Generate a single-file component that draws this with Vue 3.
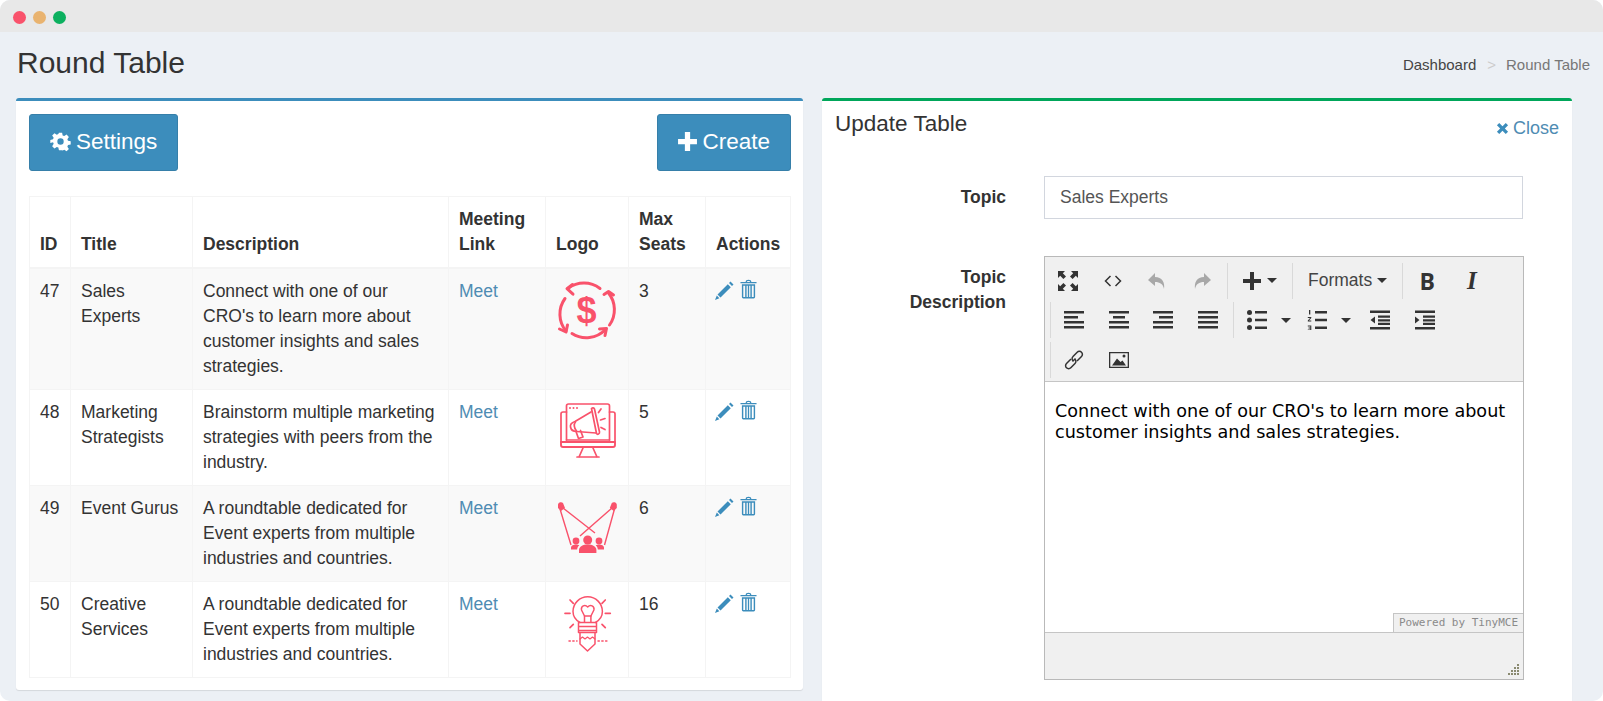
<template>
  <div class="window">
    <div class="titlebar">
      <span class="dot red"></span>
      <span class="dot amber"></span>
      <span class="dot green"></span>
    </div>

    <div class="page-head">
      <h1>Round Table</h1>
      <div class="crumbs">
        <a>Dashboard</a>
        <span class="sep">&gt;</span>
        <span class="current">Round Table</span>
      </div>
    </div>

    <div class="columns">
      <section class="box box-list">
        <div class="actions-bar">
          <button class="btn">
            <svg class="btn-icon" viewBox="0 0 24 24"><path fill-rule="evenodd" d="M10 1h4l.7 3.400 2 .8 2.900-1.900 2.900 2.900-1.900 2.900.8 2 3.400.7v4l-3.400.7-.8 2 1.900 2.900-2.900 2.900-2.900-1.900-2 .8L14 23h-4l-.7-3.400-2-.8-2.900 1.900-2.900-2.900 1.900-2.900-.8-2L-.8 14v-4l3.400-.7.8-2-1.900-2.900 2.900-2.900 2.900 1.900 2-.8zM12 8a4 4 0 1 0 0 8 4 4 0 0 0 0-8z" transform="translate(1.100 1.100) scale(.91)"/></svg>
            Settings
          </button>
          <button class="btn btn-create">
            <svg class="btn-icon plus" viewBox="0 0 20 20"><path d="M7.500 1h5v6.500H19v5h-6.500V19h-5v-6.500H1v-5h6.500z"/></svg>
            Create
          </button>
        </div>

        <table class="grid">
          <colgroup>
            <col style="width: 41px" />
            <col style="width: 122px" />
            <col style="width: 256px" />
            <col style="width: 97px" />
            <col style="width: 83px" />
            <col style="width: 77px" />
            <col style="width: 85px" />
          </colgroup>
          <thead>
            <tr>
              <th>ID</th>
              <th>Title</th>
              <th>Description</th>
              <th>Meeting Link</th>
              <th>Logo</th>
              <th>Max Seats</th>
              <th>Actions</th>
            </tr>
          </thead>
          <tbody>
            <tr v-for="row in rows" :key="row.id">
              <td>{{ row.id }}</td>
              <td>{{ row.title }}</td>
              <td>{{ row.description }}</td>
              <td><a>Meet</a></td>
              <td class="logo-cell">
                <!-- dollar cycle -->
                <svg v-if="row.logo === 'money'" class="logo" viewBox="1 0 60 60">
                  <g fill="none" stroke="#f9526b" stroke-width="3" stroke-linecap="round" stroke-linejoin="round">
                    <path d="M12 9.500 A26.500 26.500 0 0 1 44 9.500" />
                    <path d="M16.500 5.500L11 9.700l6 5.500" />
                    <path d="M52.500 14 A26.500 26.500 0 0 1 53.500 46" />
                    <path d="M48 15.500l4.500-3 5 3.500" />
                    <path d="M49.500 50.500 A26.500 26.500 0 0 1 16 54.500" />
                    <path d="M43.500 50l7-.5-1.500 7" />
                    <path d="M10 52 A26.500 26.500 0 0 1 9 19.500" />
                    <path d="M3.500 50l6.500 3 1.500-7" />
                  </g>
                  <text x="30.500" y="44" text-anchor="middle" class="dollar">$</text>
                </svg>
                <!-- megaphone on a monitor -->
                <svg v-else-if="row.logo === 'marketing'" class="logo" viewBox="0 0 60 60">
                  <g fill="none" stroke="#f9526b" stroke-width="1.700" stroke-linejoin="round" stroke-linecap="round">
                    <path d="M9.500 40V6a2 2 0 0 1 2-2h39a2 2 0 0 1 2 2v34" />
                    <path d="M9.500 12H6a2 2 0 0 0-2 2v28h54V14a2 2 0 0 0-2-2h-3.500" />
                    <path d="M4 42v3a2 2 0 0 0 2 2h50a2 2 0 0 0 2-2v-3z" stroke-width="1.900" />
                    <path d="M26 48l-4 9M36 48l4 9M20 57h22" />
                    <path d="M34 12L18 21.500c-3 1-5 3-4.500 5.500s3 4.500 6 4.500L39 33" />
                    <path d="M34.500 8.500c1-1 2.500-1 3 .5l5 23c.3 2-2 3-3 1.500z" />
                    <path d="M19 31.500l2.500 7 4.500-1.500-2.500-6.500" />
                    <path d="M18.500 22c-2 2-1.500 6 1 9" />
                    <path d="M44 9l-2.500 3.500M48 18.500l-4.500 1.500M48 29.500l-4-2" />
                    <path d="M9.500 40h43" />
                  </g>
                  <g fill="#f9526b">
                    <circle cx="13" cy="8" r="1" />
                    <circle cx="16.500" cy="8" r="1" />
                    <circle cx="20" cy="8" r="1" />
                  </g>
                </svg>
                <!-- spotlights on a crowd -->
                <svg v-else-if="row.logo === 'event'" class="logo" viewBox="0 0 60 60">
                  <g stroke="#f9526b" stroke-width="1.400" fill="none">
                    <path d="M3 13l11 36M6 12l32 25" />
                    <path d="M57.500 13l-10 36M55 12L23 40" />
                  </g>
                  <g fill="#f9526b">
                    <path d="M1 8.500a3 3 0 0 1 5-1.500l2 5-4 3-3-3z" />
                    <path d="M59.800 8.500a3 3 0 0 0-5-1.500l-2 5 4 3 3-3z" />
                    <circle cx="30.700" cy="44" r="4.500" />
                    <path d="M22 57v-3c0-3.500 4-5.500 8.700-5.500s8.700 2 8.700 5.500v3z" />
                    <circle cx="19" cy="45" r="3.400" />
                    <path d="M14 53.500v-2c0-2 2.500-3 5-3 1.300 0 2.500.2 3.300.7-1.500 1-2 3-2.200 4.300z" />
                    <circle cx="42" cy="45" r="3.400" />
                    <path d="M47 53.500v-2c0-2-2.500-3-5-3-1.300 0-2.500.2-3.300.7 1.500 1 2 3 2.200 4.300z" />
                  </g>
                </svg>
                <!-- light bulb pencil -->
                <svg v-else class="logo" viewBox="0 0 60 60">
                  <g fill="none" stroke="#f9526b" stroke-width="1.500" stroke-linecap="round" stroke-linejoin="round">
                    <path d="M23 30.500c-4.500-2.500-7-6.500-7-11a14.700 14.700 0 0 1 29.400 0c0 4.500-2.500 8.500-7 11" />
                    <path d="M27.500 30v-6l-3-6c-.8-4 3.500-6 6.200-3 2.700-3 7-1 6.200 3l-3 6v6" />
                    <path d="M27.500 24h6.500" />
                    <path d="M21.500 30.500h18M21.500 34.500h18M21.500 38.500h18M21.500 30.500v10M39.500 30.500v10M21.500 40.500h18" />
                    <path d="M23 41v11l7.500 7 7.500-7V41" />
                    <path d="M23 47l2.500-2 2.500 2 2.500-2 2.500 2 2.500-2 2.500 2" stroke-width="1.200" />
                    <path d="M8 21.300h5M48.300 21.300h5M13 8l3.300 3.300M48.300 8L45 11.300M13 35.700l3.300-3.400M48.300 35.700L45 32.300" stroke-width="1.700" />
                    <path d="M12 49h8M41 49h9" stroke-dasharray="1.300 2.500" stroke-width="1.500" />
                  </g>
                </svg>
              </td>
              <td>{{ row.seats }}</td>
              <td class="row-actions">
                <svg class="act-icon" viewBox="0 0 20 20"><path d="M13.800 3.200l3 3L6.500 16.500l-3-3zM15 2l1.500-1.500 3 3L18 5zM2.800 14.600l2.600 2.600L1 19z" /></svg>
                <svg class="act-icon trash" viewBox="0 0 18 20"><path fill-rule="evenodd" d="M6 2.500C6 1 7 .3 9 .3s3 .7 3 2.200h5.500V4H.5V2.500zM7.300 2.500h3.400C10.700 1.800 10 1.500 9 1.500s-1.700.3-1.700 1zM2 5h14v13.500a1.500 1.500 0 0 1-1.500 1.500h-11A1.500 1.500 0 0 1 2 18.500zM3.500 6.500v12h2v-12zM7 6.500v12h1.300v-12zM9.700 6.500v12H11v-12zM12.500 6.500v12h2v-12z" /></svg>
              </td>
            </tr>
          </tbody>
        </table>
      </section>

      <section class="box box-form">
        <div class="form-head">
          <h3>Update Table</h3>
          <a class="close">
            <svg class="close-icon" viewBox="0 0 14 14"><path d="M3.500 1L7 4.500 10.500 1 13 3.500 9.500 7l3.500 3.500L10.500 13 7 9.500 3.500 13 1 10.500 4.500 7 1 3.500z" /></svg>
            Close
          </a>
        </div>

        <div class="field">
          <label>Topic</label>
          <input class="text-input" value="Sales Experts" />
        </div>

        <div class="field field-editor">
          <label>Topic<br />Description</label>
          <div class="editor">
            <div class="toolbar">
              <div class="tool-row">
                <div class="tool-group first">
                  <span class="tool"><svg viewBox="0 0 20 20"><path d="M0 0h7L4.800 2.200 8 5.400 5.400 8 2.200 4.800 0 7zM20 0v7l-2.200-2.200L14.600 8 12 5.400l3.200-3.200L13 0zM0 20v-7l2.200 2.200L5.400 12 8 14.600l-3.200 3.200L7 20zM20 20h-7l2.200-2.200-3.200-3.200 2.600-2.600 3.200 3.200L20 13z" /></svg></span>
                  <span class="tool"><svg viewBox="0 0 20 20" class="stroke-icon"><path d="M7.500 5L2.500 10l5 5M12.500 5l5 5-5 5" /></svg></span>
                  <span class="tool muted"><svg viewBox="0 0 20 20"><path d="M8 2L1 9l7 6v-4c5 0 8 2 9 7 1-7-2-12-9-12z" /></svg></span>
                  <span class="tool muted"><svg viewBox="0 0 20 20"><path d="M12 2l7 7-7 6v-4c-5 0-8 2-9 7-1-7 2-12 9-12z" /></svg></span>
                </div>
                <div class="tool-group">
                  <span class="tool wide"><svg viewBox="0 0 20 20"><path d="M8 1h4v7h7v4h-7v7H8v-7H1V8h7z" /></svg><i class="caret"></i></span>
                </div>
                <div class="tool-group">
                  <span class="tool formats">Formats<i class="caret"></i></span>
                </div>
                <div class="tool-group text-tools">
                  <span class="tool bold-b">B</span>
                  <span class="tool ital-i">I</span>
                </div>
              </div>
              <div class="tool-row">
                <div class="tool-group aligns">
                  <span v-for="a in aligns" :key="a" class="tool">
                    <svg viewBox="0 0 20 20"><path :d="a" /></svg>
                  </span>
                </div>
                <div class="tool-group">
                  <span class="tool list-bullet"><svg viewBox="0 0 20 20"><circle cx="2.500" cy="2.500" r="2.500" /><circle cx="2.500" cy="10" r="2.500" /><circle cx="2.500" cy="17.500" r="2.500" /><path d="M8 1h12v2.600H8zM8 8.700h12v2.600H8zM8 16.400h12V19H8z" /></svg><i class="caret"></i></span>
                  <span class="tool list-number"><svg viewBox="0 0 20 20"><path d="M8 1h12v2.600H8zM8 8.700h12v2.600H8zM8 16.400h12V19H8zM2 0h1.300v4.500H2zM.8 7h3.500v1L2 10.500h2.300v1H.8v-1L3 8H.8zM.8 15.500h3.500v5H.8v-1h2.500v-1H1.500v-1h1.800v-1H.8z" /></svg><i class="caret"></i></span>
                  <span class="tool"><svg viewBox="0 0 20 20"><path d="M0 .5h20v2.600H0zM8 5.500h12v2.300H8zM8 9.200h12v2.300H8zM8 12.800h12v2.300H8zM0 17h20v2.600H0zM5 6.500v7L.5 10z" /></svg></span>
                  <span class="tool"><svg viewBox="0 0 20 20"><path d="M0 .5h20v2.600H0zM8 5.500h12v2.300H8zM8 9.200h12v2.300H8zM8 12.800h12v2.300H8zM0 17h20v2.600H0zM0 6.500v7L4.500 10z" /></svg></span>
                </div>
              </div>
              <div class="tool-row">
                <div class="tool-group">
                  <span class="tool"><svg viewBox="0 0 20 20" class="link-icon"><path d="M8.500 11.500l3-3" /><path d="M7 9L2.500 13.500a3 3 0 0 0 0 4.300 3 3 0 0 0 4.300 0L11 13.500a3 3 0 0 0 0-4.300" /><path d="M13 11l4.500-4.500a3 3 0 0 0 0-4.300 3 3 0 0 0-4.300 0L9 6.500a3 3 0 0 0 0 4.300" /></svg></span>
                  <span class="tool"><svg viewBox="0 0 20 20"><path fill-rule="evenodd" d="M0 2h20v16H0zM1.300 3.300v13.400h17.400V3.300z" /><path d="M3 15.500l5-7 3.500 3.500 2-1.500 3.500 5z" /><circle cx="15" cy="6" r="1.500" /></svg></span>
                </div>
              </div>
            </div>
            <div class="editor-body">
              <p>Connect with one of our CRO's to learn more about customer insights and sales strategies.</p>
              <span class="powered">Powered by TinyMCE</span>
            </div>
            <div class="status-bar">
              <svg class="resize" viewBox="0 0 12 12"><path d="M9 0h2v2H9zM6 3h2v2H6zM9 3h2v2H9zM3 6h2v2H3zM6 6h2v2H6zM9 6h2v2H9zM0 9h2v2H0zM3 9h2v2H3zM6 9h2v2H6zM9 9h2v2H9z" /></svg>
            </div>
          </div>
        </div>
      </section>
    </div>
  </div>
</template>

<script setup>
const rows = [
  {
    id: 47,
    title: 'Sales Experts',
    description: "Connect with one of our CRO's to learn more about customer insights and sales strategies.",
    logo: 'money',
    seats: 3,
  },
  {
    id: 48,
    title: 'Marketing Strategists',
    description: 'Brainstorm multiple marketing strategies with peers from the industry.',
    logo: 'marketing',
    seats: 5,
  },
  {
    id: 49,
    title: 'Event Gurus',
    description: 'A roundtable dedicated for Event experts from multiple industries and countries.',
    logo: 'event',
    seats: 6,
  },
  {
    id: 50,
    title: 'Creative Services',
    description: 'A roundtable dedicated for Event experts from multiple industries and countries.',
    logo: 'idea',
    seats: 16,
  },
]

// left, center, right, justify
const aligns = [
  'M0 1h20v2.600H0zM0 6h14v2.600H0zM0 11h20v2.600H0zM0 16h20v2.600H0z',
  'M0 1h20v2.600H0zM4 6h12v2.600H4zM0 11h20v2.600H0zM0 16h20v2.600H0z',
  'M0 1h20v2.600H0zM6 6h14v2.600H6zM0 11h20v2.600H0zM0 16h20v2.600H0z',
  'M0 1h20v2.600H0zM0 6h20v2.600H0zM0 11h20v2.600H0zM0 16h20v2.600H0z',
]
</script>

<style>
html,
body {
  margin: 0;
  height: 701px;
  overflow: hidden;
  background: #fff;
}
</style>

<style scoped>
.window {
  height: 701px;
  overflow: hidden;
  background: #ecf0f5;
  border-radius: 10px;
  font-family: 'Liberation Sans', Arial, sans-serif;
  color: #333;
  box-sizing: border-box;
}

.titlebar {
  display: flex;
  align-items: center;
  gap: 7px;
  height: 32px;
  padding: 2px 0 0 13px;
  box-sizing: border-box;
  background: #e8e8e8;
}

.dot {
  width: 13px;
  height: 13px;
  border-radius: 50%;
}
.red { background: #f9526b; }
.amber { background: #e9b36f; }
.green { background: #0cb05f; }

.page-head {
  display: flex;
  justify-content: space-between;
  align-items: flex-start;
  height: 66px;
  padding: 0 13px 0 17px;
}

h1 {
  margin: 13px 0 0;
  font-size: 30px;
  font-weight: 400;
  line-height: 36px;
}

.crumbs {
  margin-top: 25px;
  font-size: 15px;
  line-height: 16px;
}
.crumbs a { color: #444; }
.crumbs .sep { margin: 0 10px 0 11px; color: #ccc; }
.crumbs .current { color: #777; }

.columns {
  display: grid;
  grid-template-columns: 787px 750px;
  gap: 19px;
  padding-left: 16px;
  align-items: start;
}

.box {
  background: #fff;
  border-top: 3px solid #3c8dbc;
  border-radius: 3px;
  box-shadow: 0 1px 1px rgba(0, 0, 0, 0.1);
}

.box-list {
  padding: 13px 12px 12px 13px;
  height: 592px;
  box-sizing: border-box;
}

.box-form {
  border-top-color: #00a65a;
  height: 640px;
}

.actions-bar {
  display: flex;
  justify-content: space-between;
  margin-bottom: 25px;
}

.btn {
  display: flex;
  align-items: center;
  justify-content: center;
  gap: 5px;
  height: 57px;
  padding: 0 20px 2px;
  background: #3c8dbc;
  border: 1px solid #367fa9;
  border-radius: 3px;
  color: #fff;
  font: 400 22.500px 'Liberation Sans', Arial, sans-serif;
}

.btn-create {
  padding: 0 20px 2px 19px;
  gap: 4px;
}

.btn-icon {
  width: 21px;
  height: 21px;
  fill: #fff;
}

.grid {
  width: 761px;
  table-layout: fixed;
  border-collapse: collapse;
  font-size: 17.500px;
  line-height: 25px;
  border: 1px solid #f4f4f4;
}

.grid th,
.grid td {
  padding: 10px;
  border: 1px solid #f4f4f4;
  text-align: left;
  vertical-align: top;
}

.grid th {
  vertical-align: bottom;
  border-bottom-width: 2px;
  font-weight: 700;
}

.grid tbody tr:nth-child(odd) {
  background: #f9f9f9;
}

.grid a {
  color: #4f8cb3;
}

.logo-cell {
  line-height: 0 !important;
}

.logo {
  display: block;
  width: 60px;
  height: 60px;
  margin: 0 auto;
  overflow: visible;
}

.dollar {
  fill: #f9526b;
  font: 700 36px 'Liberation Sans', Arial, sans-serif;
}

.row-actions {
  white-space: nowrap;
}

.act-icon {
  width: 20px;
  height: 20px;
  fill: #3c8dbc;
  margin: 0 6px 0 -2px;
}

.act-icon.trash {
  width: 17px;
  margin: 0;
  vertical-align: 2px;
}

.form-head {
  display: flex;
  justify-content: space-between;
  align-items: flex-start;
  padding: 10px 13px 0 13px;
}

h3 {
  margin: 0;
  font-size: 22.500px;
  font-weight: 400;
  line-height: 26px;
}

.close {
  display: flex;
  align-items: center;
  gap: 4px;
  margin-top: 5px;
  font-size: 18px;
  line-height: 24px;
  color: #4f8cb3;
}

.close-icon {
  width: 13px;
  height: 13px;
  fill: #3c8dbc;
}

.field {
  display: grid;
  grid-template-columns: 184px 480px;
  column-gap: 38px;
  margin-top: 36px;
}

.field label {
  text-align: right;
  font-size: 17.500px;
  font-weight: 700;
  line-height: 25px;
  padding-top: 9px;
}

.text-input {
  box-sizing: border-box;
  width: 479px;
  height: 43px;
  padding: 0 15px;
  border: 1px solid #d2d6de;
  font: 17.500px 'Liberation Sans', Arial, sans-serif;
  color: #555;
}

.field-editor {
  margin-top: 37px;
}

.editor {
  display: flex;
  flex-direction: column;
  box-sizing: border-box;
  height: 424px;
  border: 1px solid #b9b9b9;
}

.toolbar {
  background: #f0f0f0;
  border-bottom: 1px solid #c5c5c5;
  padding: 4px 0 1px 0;
}

.tool-row {
  display: flex;
  align-items: center;
  height: 39.500px;
  padding-left: 5px;
}

.tool-group {
  display: flex;
  align-items: center;
  height: 36px;
  border-left: 1px solid #d9d9d9;
  padding: 0 1px;
}

.tool-group.first {
  border-left: 0;
  margin-left: -4px;
  padding: 0 3px 0 0;
}

.tool-group.aligns {
  padding-right: 3px;
}

.tool-group.text-tools {
  padding-left: 2px;
}

.tool {
  display: flex;
  align-items: center;
  justify-content: center;
  flex: none;
  width: 44.500px;
  height: 36px;
  box-sizing: border-box;
  color: #333;
}

.tool svg {
  width: 20px;
  height: 20px;
  fill: #333;
}

.tool.muted svg {
  fill: #a8a8a8;
}

.stroke-icon,
.link-icon {
  fill: none !important;
  stroke: #333;
  stroke-width: 1.500;
}

.tool.wide {
  width: 62px;
  justify-content: flex-start;
  padding-left: 13px;
  gap: 5px;
}

.tool.list-bullet {
  width: 56px;
  justify-content: flex-start;
  padding-left: 12px;
  gap: 14px;
}

.tool.list-number {
  width: 67px;
  justify-content: flex-start;
  padding-left: 16px;
  gap: 14px;
}

.tool.formats {
  width: 107px;
  justify-content: flex-start;
  padding-left: 14px;
  gap: 5px;
  font-size: 17.500px;
  color: #444;
}

.caret {
  width: 0;
  height: 0;
  border: 5px solid transparent;
  border-top-color: #333;
  border-bottom: 0;
}

.bold-b {
  font: 700 23px 'Open Sans', 'Liberation Sans', sans-serif;
}

.ital-i {
  font: italic 700 25px 'Liberation Serif', serif;
}

.editor-body {
  position: relative;
  flex: 1;
  padding: 19px 10px 0 10px;
  background: #fff;
  font-family: 'DejaVu Sans', Verdana, sans-serif;
  font-size: 17.600px;
  line-height: 21.500px;
  color: #000;
}

.editor-body p {
  margin: 0;
}

.powered {
  position: absolute;
  right: 0;
  bottom: 0;
  width: 130px;
  height: 19px;
  box-sizing: border-box;
  border-top: 1px solid #c5c5c5;
  border-left: 1px solid #c5c5c5;
  background: #f0f0f0;
  font-family: 'DejaVu Sans Mono', monospace;
  font-size: 11px;
  line-height: 17px;
  text-align: center;
  color: #8a8a8a;
  white-space: nowrap;
}

.status-bar {
  position: relative;
  height: 46px;
  background: #f0f0f0;
  border-top: 1px solid #c5c5c5;
}

.resize {
  position: absolute;
  right: 3px;
  bottom: 3px;
  width: 12px;
  height: 12px;
  fill: #8a8a70;
}
</style>
